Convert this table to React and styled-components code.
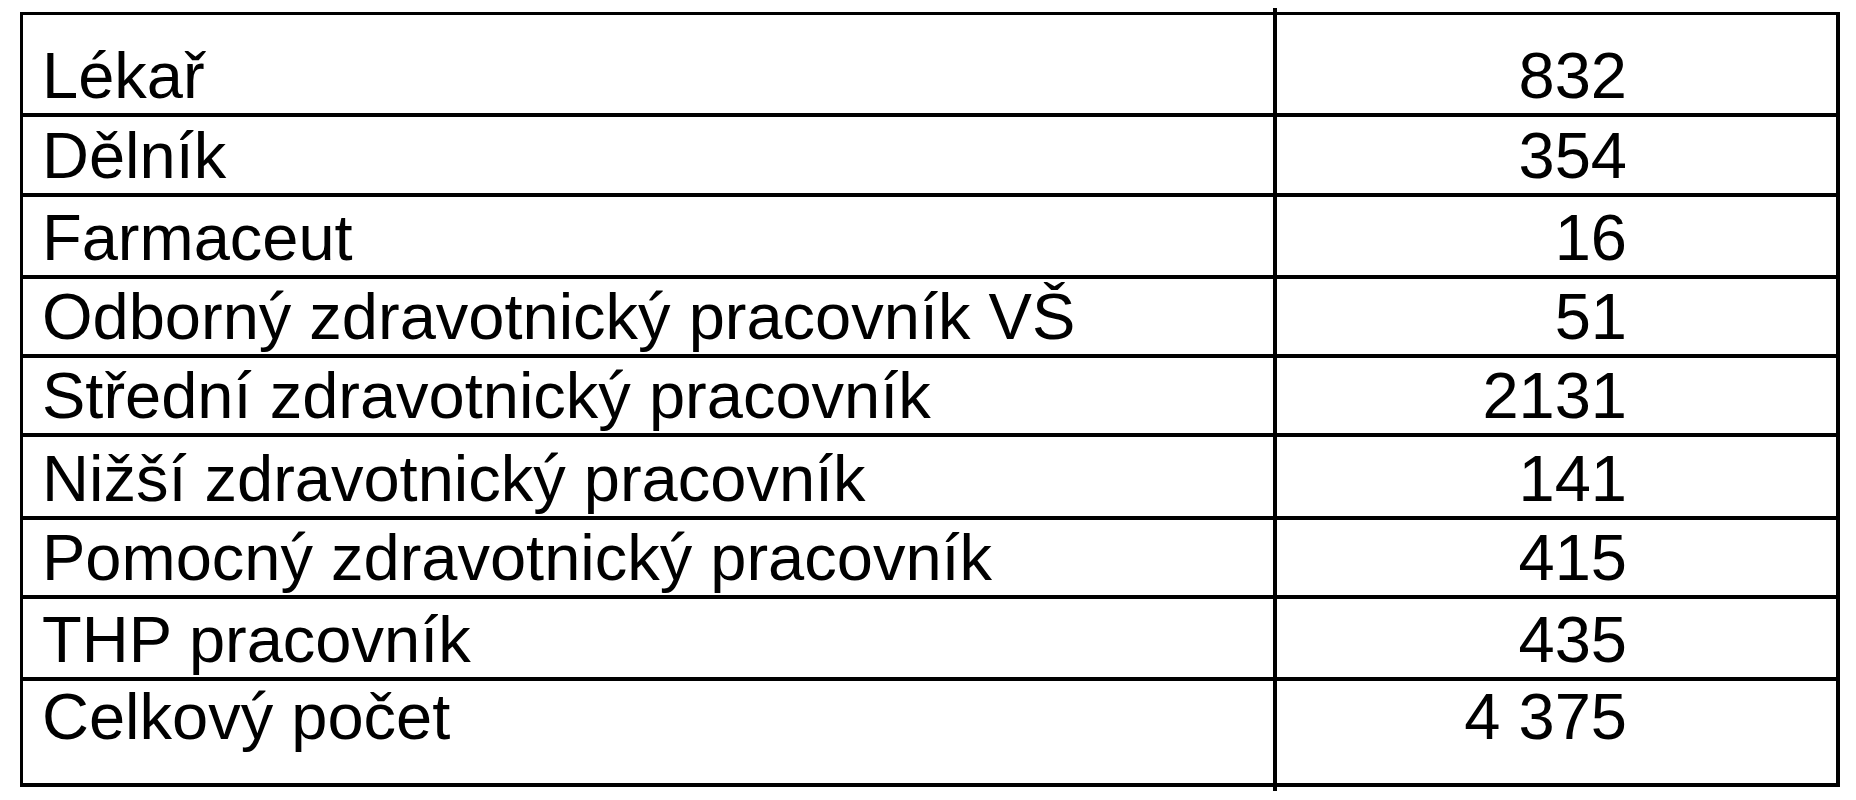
import React from "react";
import styled, { createGlobalStyle } from "styled-components";

const Global = createGlobalStyle`
  html, body { margin: 0; padding: 0; background: #fff; }
  body { font-family: "Liberation Sans", Arial, Helvetica, sans-serif; color: #000; }
`;

const Page = styled.div`
  width: 1856px;
  height: 800px;
  box-sizing: border-box;
  padding: 12px 0 0 20px;
  background: #fff;
`;

const Table = styled.div`
  position: relative;
  width: 1820px;
  box-sizing: border-box;
  border: 3px solid #000;
  border-right-width: 4px;
  border-bottom-width: 4px;
  display: flex;
  flex-direction: column;

  &::after {
    content: "";
    position: absolute;
    left: 1250px;
    top: -7px;
    bottom: -8px;
    width: 4px;
    background: #000;
  }
`;

const Row = styled.div`
  display: grid;
  grid-template-columns: 1250px 1fr;
  box-sizing: border-box;
  height: ${(p) => p.$h}px;
  border-top: ${(p) => (p.$first ? 0 : 4)}px solid #000;
  padding-bottom: ${(p) => (p.$last ? 34 : 5)}px;
  align-items: end;
`;

const Label = styled.div`
  font-size: 65px;
  line-height: 65px;
  padding-left: 19px;
  white-space: nowrap;
`;

const Value = styled.div`
  font-size: 65px;
  line-height: 65px;
  text-align: right;
  padding-right: 209px;
  white-space: nowrap;
`;

const rows = [
  { label: "Lékař", value: "832", h: 98 },
  { label: "Dělník", value: "354", h: 80 },
  { label: "Farmaceut", value: "16", h: 82 },
  { label: "Odborný zdravotnický pracovník VŠ", value: "51", h: 79 },
  { label: "Střední zdravotnický pracovník", value: "2131", h: 79 },
  { label: "Nižší zdravotnický pracovník", value: "141", h: 83 },
  { label: "Pomocný zdravotnický pracovník", value: "415", h: 79 },
  { label: "THP pracovník", value: "435", h: 82 },
  { label: "Celkový počet", value: "4 375", h: 106 },
];

export default function App() {
  return (
    <>
      <Global />
      <Page>
        <Table>
          {rows.map((r, i) => (
            <Row key={r.label} $h={r.h} $first={i === 0} $last={i === rows.length - 1}>
              <Label>{r.label}</Label>
              <Value>{r.value}</Value>
            </Row>
          ))}
        </Table>
      </Page>
    </>
  );
}
